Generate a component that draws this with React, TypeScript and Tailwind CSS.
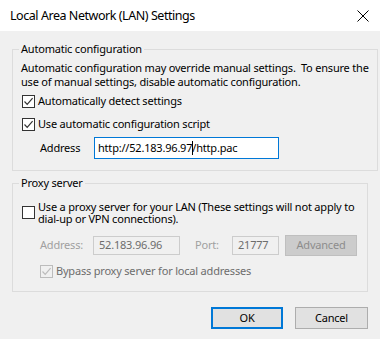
import React from "react";

const FONT = { fontFamily: '"Segoe UI", "Noto Sans", sans-serif' };

function Check({ checked, disabled, className }: { checked?: boolean; disabled?: boolean; className?: string }) {
  return (
    <div
      className={`w-[13px] h-[13px] shrink-0 border flex items-center justify-center ${
        disabled ? "border-[#bcbcbc] bg-[#f0f0f0]" : "border-[#333333] bg-white"
      } ${className ?? ""}`}
    >
      {checked && (
        <svg width="11" height="11" viewBox="0 0 11 11">
          <path
            d="M1.5 5.5 L4.2 8.3 L9.6 2.2"
            fill="none"
            stroke={disabled ? "#bcbcbc" : "#333333"}
            strokeWidth="1.2"
          />
        </svg>
      )}
    </div>
  );
}

function Group({ title, children, className }: { title: string; children: React.ReactNode; className?: string }) {
  return (
    <fieldset className={`border border-[#dcdcdc] px-[8px] ${className ?? ""}`}>
      <legend className="-ml-[2px] px-[2px] leading-[16px] text-[#000]">{title}</legend>
      {children}
    </fieldset>
  );
}

export default function App() {
  return (
    <div
      className="w-[380px] h-[339px] bg-[#f0f0f0] text-[11px] tracking-[-0.2px] text-black overflow-hidden whitespace-nowrap"
      style={FONT}
    >
      {/* Title bar */}
      <div className="h-[31px] bg-white flex items-center justify-between pl-[10px] pr-[11px]">
        <span className="text-[12.5px] tracking-[-0.45px] leading-[20px] text-[#000]">Local Area Network (LAN) Settings</span>
        <svg width="12" height="12" viewBox="0 0 12 12">
          <path d="M0.5 0.5 L11.5 11.5 M11.5 0.5 L0.5 11.5" stroke="#000" strokeWidth="1" />
        </svg>
      </div>

      <div className="px-[12px]">
        {/* Automatic configuration */}
        <Group title="Automatic configuration" className="mt-[10px] pb-[11px]">
          <p className="mt-[4px] leading-[14px]">
            Automatic configuration may override manual settings.&nbsp; To ensure the
            <br />
            use of manual settings, disable automatic configuration.
          </p>
          <div className="mt-[5px] flex items-center gap-[3px] h-[14px] ml-[1px]">
            <Check checked />
            <span>Automatically detect settings</span>
          </div>
          <div className="mt-[9px] flex items-center gap-[3px] h-[14px] ml-[1px]">
            <Check checked />
            <span>Use automatic configuration script</span>
          </div>
          <div className="mt-[6px] flex items-center h-[22px] pl-[19px]">
            <span className="w-[54px]">Address</span>
            <div className="w-[185px] h-[22px] bg-white border border-[#0078d7] flex items-center px-[3px]">
              <span>http://52.183.96.97</span>
              <span className="inline-block w-[1px] h-[14px] bg-black -mr-[1px]" />
              <span>/http.pac</span>
            </div>
          </div>
        </Group>

        {/* Proxy server */}
        <Group title="Proxy server" className="mt-[4px] pb-[13px]">
          <div className="mt-[10px] flex items-start gap-[3px] ml-[1px]">
            <Check className="mt-[5px]" />
            <p className="leading-[12px]">
              Use a proxy server for your LAN (These settings will not apply to
              <br />
              dial-up or VPN connections).
            </p>
          </div>
          <div className="mt-[10px] flex items-center pl-[19px] h-[21px]">
            <span className="w-[53px] text-[#a0a0a0]">Address:</span>
            <div className="w-[87px] h-[19px] border border-[#cccccc] bg-[#f0f0f0] flex items-center px-[5px] text-[#6d6d6d]">
              52.183.96.96
            </div>
            <span className="ml-[15px] w-[37px] text-[#a0a0a0]">Port:</span>
            <div className="w-[47px] h-[19px] border border-[#cccccc] bg-[#f0f0f0] flex items-center px-[5px] text-[#6d6d6d]">
              21777
            </div>
            <div className="ml-[6px] w-[72px] h-[21px] border border-[#bfbfbf] bg-[#cccccc] flex items-center justify-center text-[#8c8c8c]">
              Advanced
            </div>
          </div>
          <div className="mt-[9px] flex items-center gap-[3px] pl-[19px] h-[13px]">
            <Check checked disabled />
            <span className="text-[#6d6d6d]">Bypass proxy server for local addresses</span>
          </div>
        </Group>

        {/* Buttons */}
        <div className="mt-[15px] flex justify-end gap-[12px]">
          <div className="w-[72px] h-[22px] border-2 border-[#0078d7] bg-[#e1e1e1] flex items-center justify-center">
            OK
          </div>
          <div className="w-[73px] h-[22px] border border-[#adadad] bg-[#e1e1e1] flex items-center justify-center">
            Cancel
          </div>
        </div>
      </div>
    </div>
  );
}
